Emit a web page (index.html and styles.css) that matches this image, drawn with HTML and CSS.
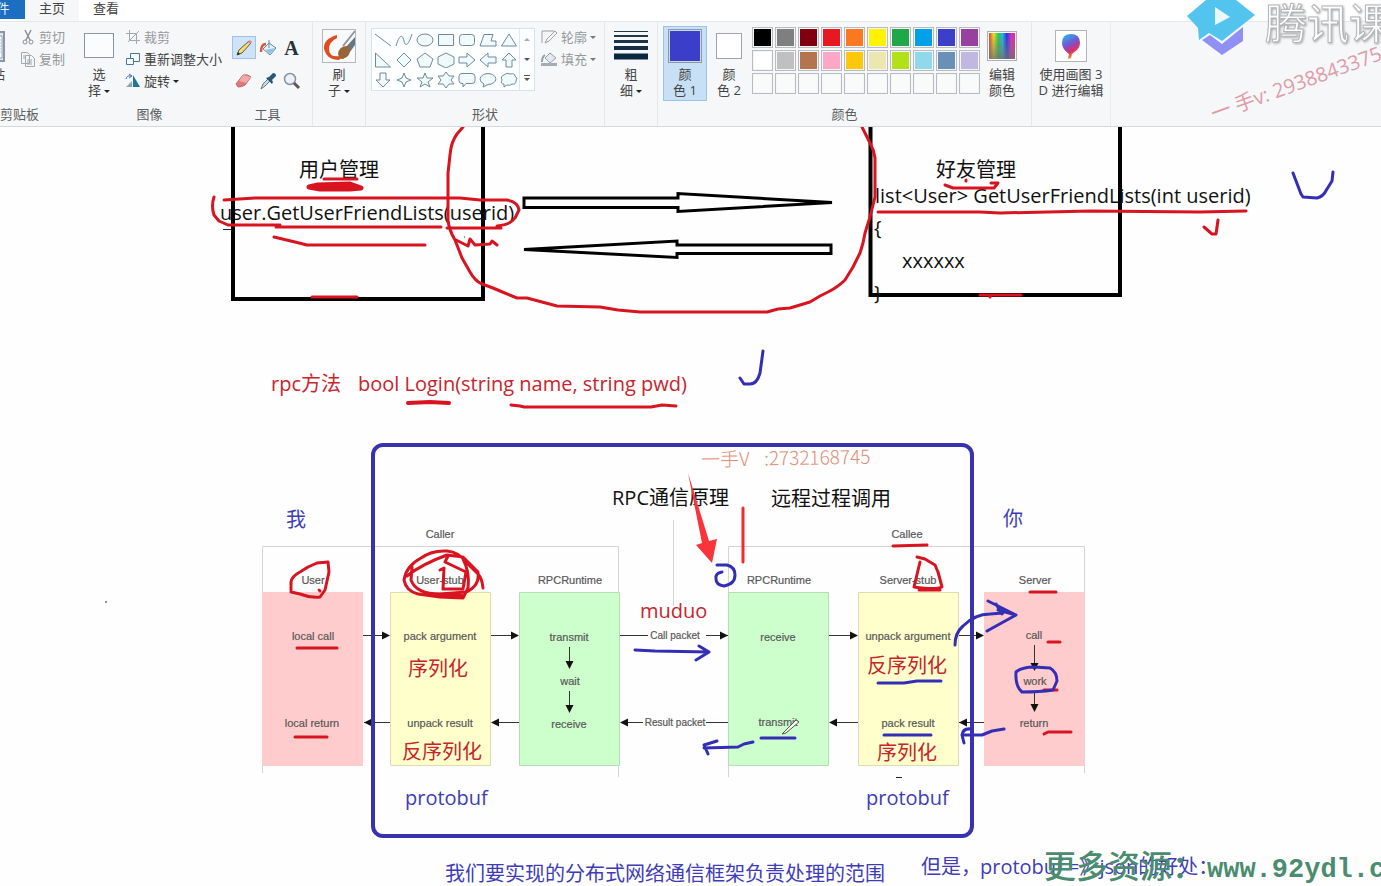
FILE: index.html
```html
<!DOCTYPE html>
<html lang="zh-CN">
<head>
<meta charset="utf-8">
<title>画图</title>
<link rel="stylesheet" href="styles.css">
</head>
<body>
<svg class="defs" aria-hidden="true">
  <defs>
    <linearGradient id="rainbow" x1="0" x2="1" y1="0" y2="0">
      <stop offset="0" stop-color="#e8402a"/><stop offset=".18" stop-color="#f0e020"/><stop offset=".36" stop-color="#28c848"/>
      <stop offset=".52" stop-color="#20b8e8"/><stop offset=".68" stop-color="#2830e0"/><stop offset=".86" stop-color="#d828d8"/><stop offset="1" stop-color="#f02860"/>
    </linearGradient>
    <linearGradient id="fade" x1="0" x2="0" y1="0" y2="1">
      <stop offset="0" stop-color="#808080" stop-opacity="0"/><stop offset="1" stop-color="#707070" stop-opacity=".8"/>
    </linearGradient>
    <linearGradient id="balloon" x1=".2" x2=".6" y1="0" y2="1">
      <stop offset="0" stop-color="#28b8e8"/><stop offset=".4" stop-color="#7058d8"/><stop offset=".7" stop-color="#d83068"/><stop offset="1" stop-color="#f0b020"/>
    </linearGradient>
  </defs>
</svg>

<header class="top">
  <nav class="tabs">
    <button class="tab file">文件</button>
    <button class="tab active">主页</button>
    <button class="tab">查看</button>
  </nav>

  <div class="ribbon">
    <section class="group">
      <div class="tools clip">
        <button class="big paste"><span class="pic"><svg width="26" height="32"><rect x="1" y="2" width="24" height="29" fill="#dce8f4" stroke="#8a94a4" stroke-width="2"/><path d="M10 6h13v22H10z" fill="#fff" stroke="#8aa0b8"/><path d="M12 10h10M12 13h10M12 16h10M12 19h10M12 22h10" stroke="#9cc0e0"/></svg></span>粘贴</button>
        <div class="stack">
          <button class="small dim"><svg width="16" height="16"><path d="M5 1l5 10M11 1L6 11" stroke="#8c9096" stroke-width="1.5" fill="none"/><circle cx="5" cy="13" r="2" fill="none" stroke="#8c9096"/><circle cx="11" cy="13" r="2" fill="none" stroke="#8c9096"/></svg>剪切</button>
          <button class="small dim"><svg width="16" height="16"><path d="M1.500 1.500h6l2 2v9h-8z M5.500 4.500h6l3 3v8h-9z" fill="#f4f6f8" stroke="#a4a8ac"/><path d="M7 9h5M7 11h5M7 13h5M3 5h2M3 7h2" stroke="#a4a8ac"/></svg>复制</button>
        </div>
      </div>
      <h2>剪贴板</h2>
    </section>

    <section class="group">
      <div class="tools image">
        <button class="big select"><span class="pic"><svg width="30" height="26"><rect x=".5" y=".5" width="29" height="24" fill="#fafcfd" stroke="#8a94a0"/></svg></span>选<br>择<i class="caret"></i></button>
        <div class="stack">
          <button class="small dim"><svg width="16" height="16"><path d="M4.500 1v10.500H15M1 4.500h10.500V15M3 13L14 2" fill="none" stroke="#a0a8b0"/></svg>裁剪</button>
          <button class="small"><svg width="16" height="16"><path d="M5.500 2.500h9v8h-9z" fill="#f4f9fd" stroke="#4a7898"/><path d="M1.500 7.500h7v6h-7z" fill="#f4f9fd" stroke="#4a7898"/></svg>重新调整大小</button>
          <button class="small"><svg width="16" height="16"><path d="M8 2v12h7z" fill="#1c7898"/><path d="M7 8v6H1z" fill="#8ca4b4"/><path d="M1 6q1-4 5-3M4 1l3 2-3 2" fill="none" stroke="#3a70b0"/></svg>旋转<i class="caret"></i></button>
        </div>
      </div>
      <h2>图像</h2>
    </section>

    <section class="group">
      <div class="tools palette-tools">
        <button class="tool on" aria-label="铅笔"><svg width="18" height="18"><path d="M2 16l2-5L14 2l2 2L7 14z" fill="#f4dc70" stroke="#5a5a50"/><path d="M2 16l1-3 2 2z" fill="#222"/><path d="M13 3l2 2 2-2-2-2z" fill="#d88898"/></svg></button>
        <button class="tool" aria-label="填充"><svg width="18" height="18"><path d="M4 10l6-6 7 5-6 7z" fill="#e4f2f8" stroke="#6a8aa0"/><path d="M10 9V1" stroke="#6a8aa0"/><path d="M6 11l10-2-5 6z" fill="#8cc4e4"/><path d="M7 5Q2 5 2 13" fill="none" stroke="#e05840" stroke-width="2.500"/></svg></button>
        <button class="tool letter" aria-label="文本">A</button>
        <button class="tool" aria-label="橡皮擦"><svg width="18" height="18"><path d="M1 12L8 3q5-1 8 2l-6 8q-3 2-7 2z" fill="#e07878" stroke="#b86868"/><path d="M8 3l8 2-5 6-7-2z" fill="#f4a8a8"/></svg></button>
        <button class="tool" aria-label="颜色选取器"><svg width="18" height="18"><path d="M2 17l2-5 5-5 2 2-5 5z" fill="#c8e0ee" stroke="#607888"/><path d="M7 6l6 6 1-2-1-2 4-4q0-3-3-3l-4 4z" fill="#28587c"/></svg></button>
        <button class="tool" aria-label="放大镜"><svg width="18" height="18"><circle cx="7" cy="7" r="5.500" fill="#eaf2f8" stroke="#8890a0" stroke-width="1.500"/><path d="M11 11l5 5" stroke="#605850" stroke-width="3"/></svg></button>
      </div>
      <h2>工具</h2>
    </section>

    <section class="group ruled">
      <div class="tools centered">
        <button class="big"><span class="pic"><svg width="34" height="34"><rect x=".5" y=".5" width="33" height="33" fill="#f8f9fa" stroke="#b4b8bc"/><path d="M15 6Q1 10 2 20q3 11 14 11 4-1 3-4Q7 29 7 20q0-7 8-11z" fill="#e04c20"/><path d="M33 8L24 18l4 5 5-7z" fill="#607888"/><path d="M33 2L21 17" stroke="#8c98a0" stroke-width="2"/><path d="M27 17q-10-1-11 8 1 5 5 5 8-3 7-10z" fill="#98643a"/></svg></span>刷<br>子<i class="caret"></i></button>
      </div>
    </section>

    <section class="group ruled">
      <div class="tools shapes">
        <div class="gallery">
          <div class="cells">
            <button aria-label="直线"><svg><path d="M1 2l16 12"/></svg></button>
            <button aria-label="曲线"><svg><path d="M1 14C5 0 8 4 9 9s4 6 8-7"/></svg></button>
            <button aria-label="椭圆"><svg><ellipse cx="9" cy="8" rx="8" ry="6"/></svg></button>
            <button aria-label="矩形"><svg><path d="M1.500 2.500h15v11h-15z"/></svg></button>
            <button aria-label="圆角矩形"><svg><rect x="1.500" y="2.500" width="15" height="11" rx="3"/></svg></button>
            <button aria-label="多边形"><svg><path d="M5 2.500h9L12 9h5v5H1z"/></svg></button>
            <button aria-label="三角形"><svg><path d="M9 2l7.500 12h-15z"/></svg></button>
            <button aria-label="直角三角形"><svg><path d="M1.500 1v14h15z"/></svg></button>
            <button aria-label="菱形"><svg><path d="M9 1l7 7-7 7-7-7z"/></svg></button>
            <button aria-label="五边形"><svg><path d="M9 1l8 6-3 8H4L1 7z"/></svg></button>
            <button aria-label="六边形"><svg><path d="M9 1l8 4v7l-8 4-8-4V5z"/></svg></button>
            <button aria-label="右箭头"><svg><path d="M1 5h8V1l8 7-8 7v-4H1z"/></svg></button>
            <button aria-label="左箭头"><svg><path d="M17 5H9V1L1 8l8 7v-4h8z"/></svg></button>
            <button aria-label="上箭头"><svg><path d="M6 15V8H2l7-7 7 7h-4v7z"/></svg></button>
            <button aria-label="下箭头"><svg><path d="M6 1v7H2l7 7 7-7h-4V1z"/></svg></button>
            <button aria-label="四角星"><svg><path d="M9 1l2 5 5 2-5 2-2 5-2-5-5-2 5-2z"/></svg></button>
            <button aria-label="五角星"><svg><path d="M9 1l2 5h6l-5 4 2 5-5-3-5 3 2-5-5-4h6z"/></svg></button>
            <button aria-label="六角星"><svg><path d="M9 0l3 4h5l-3 4 3 4h-5l-3 4-3-4H1l3-4-3-4h5z"/></svg></button>
            <button aria-label="圆角标注"><svg><path d="M4 1.500h10q3 0 3 3v4q0 3-3 3H8L5 15v-3.500H4q-3 0-3-3v-4q0-3 3-3z"/></svg></button>
            <button aria-label="椭圆标注"><svg><path d="M5 12Q1 10 1 7q1-5 8-5.500 7 .5 8 5.500-1 5-8 5.500L4 15z"/></svg></button>
            <button aria-label="云形标注"><svg><path d="M4 12Q0 12 2 8 0 4 4 3q3-3 6-1 5-1 5 2 3 2 1 5 0 4-4 3-2 2-5 1l-3 2z"/></svg></button>
          </div>
          <div class="scroll"><button aria-label="上一行"><i class="caret up"></i></button><button aria-label="下一行"><i class="caret"></i></button><button aria-label="更多"><i class="caret more"></i></button></div>
        </div>
        <div class="stack">
          <button class="small dim"><svg width="18" height="16"><path d="M14 2H2v12M5 14l2-4 8-8 2 2-8 8z" fill="none" stroke="#9aa0a4"/></svg>轮廓<i class="caret"></i></button>
          <button class="small dim"><svg width="18" height="16"><path d="M5 7l5-5 6 5-6 5z" fill="#e4e8ec" stroke="#98a0a8"/><path d="M5 4Q2 6 2 11" fill="none" stroke="#98a0a8" stroke-width="2"/><path d="M1 12h16v3H1z" fill="#a4acb4"/></svg>填充<i class="caret"></i></button>
        </div>
      </div>
      <h2>形状</h2>
    </section>

    <section class="group ruled">
      <div class="tools centered">
        <button class="big"><span class="pic"><svg width="34" height="32"><path d="M0 1.500h34" stroke="#24384a"/><path d="M0 6h34" stroke="#24384a" stroke-width="2"/><path d="M0 11.500h34" stroke="#1c3448" stroke-width="3"/><path d="M0 18h34" stroke="#142c44" stroke-width="4"/><path d="M0 26.500h34" stroke="#0c2840" stroke-width="6"/></svg></span>粗<br>细<i class="caret"></i></button>
      </div>
    </section>

    <section class="group ruled">
      <div class="tools colors">
        <button class="big chosen"><span class="pic"><svg width="34" height="34"><rect x=".5" y=".5" width="33" height="33" fill="#c8d8ee" stroke="#9098a8"/><rect x="2" y="2" width="30" height="30" fill="#3a3ec8"/></svg></span>颜<br>色 1</button>
        <button class="big second"><span class="pic"><svg width="26" height="26"><rect x=".5" y=".5" width="25" height="25" fill="#fff" stroke="#a0a4a8"/></svg></span>颜<br>色 2</button>
        <div class="swatches">
          <button class="c-black" aria-label="黑色"></button><button class="c-gray" aria-label="灰色"></button><button class="c-maroon" aria-label="深红"></button><button class="c-red" aria-label="红色"></button><button class="c-orange" aria-label="橙色"></button><button class="c-yellow" aria-label="黄色"></button><button class="c-green" aria-label="绿色"></button><button class="c-sky" aria-label="青绿"></button><button class="c-indigo" aria-label="靛蓝"></button><button class="c-purple" aria-label="紫色"></button>
          <button class="c-white" aria-label="白色"></button><button class="c-silver" aria-label="浅灰"></button><button class="c-brown" aria-label="褐色"></button><button class="c-pink" aria-label="玫瑰色"></button><button class="c-gold" aria-label="金色"></button><button class="c-cream" aria-label="浅黄"></button><button class="c-lime" aria-label="酸橙色"></button><button class="c-aqua" aria-label="淡青绿"></button><button class="c-steel" aria-label="蓝灰"></button><button class="c-lilac" aria-label="淡紫"></button>
          <button></button><button></button><button></button><button></button><button></button><button></button><button></button><button></button><button></button><button></button>
        </div>
        <button class="big second"><span class="pic"><svg width="30" height="30"><rect x=".5" y=".5" width="29" height="29" fill="#fff" stroke="#b0b0b4"/><rect x="2" y="2" width="26" height="26" fill="url(#rainbow)"/><rect x="2" y="2" width="26" height="26" fill="url(#fade)"/></svg></span>编辑<br>颜色</button>
      </div>
      <h2>颜色</h2>
    </section>

    <section class="group ruled last">
      <div class="tools centered">
        <button class="big"><span class="pic"><svg width="32" height="32"><rect x=".5" y=".5" width="31" height="31" fill="#fff" stroke="#b4b4b8"/><path d="M16 4q9 0 9 9 0 6-8 11l-1 4-3 1 1-5q-7-5-7-11 0-9 9-9z" fill="url(#balloon)"/></svg></span>使用画图 3<br>D 进行编辑</button>
      </div>
    </section>
  </div>

  <svg class="brand" width="200" height="127" viewBox="1181 0 200 127">
    <path d="M1202 40L1210 35 1222 44 1243 27V41L1222 55z" fill="#9090f4"/>
    <path d="M1187 16L1206 0H1236L1255 15 1222 41 1209 33 1199 40 1198 28z" fill="#52c4ee"/>
    <path d="M1215 7v18l15-8z" fill="#e8f8fe"/>
    <text class="brand-name" x="1265" y="39">腾讯课堂</text>
    <g transform="translate(1214 121) rotate(-20)" class="seller"><text x="0" y="0">一 手v: 2938843375</text></g>
  </svg>
</header>

<main>
<svg class="canvas" viewBox="0 127 1381 759">
  <g class="frame">
    <path d="M233 127V299H483V127M870.500 127V295H1120V127"/>
    <path d="M524 198H678V193.500L832 202.500 678 211.500V207.500H524zM831 245H677V241L524 249.500 677 257.500V253.500H831z" stroke-width="3"/>
  </g>
  <g class="note black">
    <text x="299" y="177">用户管理</text><text x="220" y="220">user.GetUserFriendLists(userid)</text>
    <text x="936" y="177">好友管理</text><text x="875" y="203">list&lt;User&gt; GetUserFriendLists(int userid)</text>
    <text x="874" y="235">{</text><text x="902" y="268">xxxxxx</text><text x="874" y="300">}</text>
    <text x="612" y="505">RPC通信原理</text><text x="771" y="506">远程过程调用</text>
  </g>
  <g class="note red"><text x="271" y="391">rpc方法</text><text x="358" y="391">bool Login(string name, string pwd)</text></g>

  <g class="lanes">
    <path d="M262.500 773V546.500H618.500V777M728.500 777V546.500H1084.500V773M673.500 520V606" fill="none" stroke="#d4d4d4"/>
    <path class="pink" d="M262 592h101v174h-101zM984 592h101v174h-101z"/>
    <path class="cream" d="M390.500 592.500h100v173h-100zM858.500 592.500h100v173h-100z"/>
    <path class="mint" d="M519.500 592.500h100v173h-100zM728.500 592.500h100v173h-100z"/>
  </g>
  <g class="flow">
    <path d="M363 635.500H389M491 635.500H518M829 635.500H857M959 635.500H983M984 722.500H959M858 722.500H830M519 722.500H492M390 722.500H364M569.500 647V668M569.500 691V712M1034.500 645V670M1034.500 691V711M706 635.500H728M643 722.500H621M620 635.500H648M706 722.500H728"/>
    <path class="heads" d="M390 635.500l-8-4v8zM519 635.500l-8-4v8zM728 635.500l-8-4v8zM858 635.500l-8-4v8zM984 635.500l-8-4v8zM364 722.500l8-4v8zM491 722.500l8-4v8zM620 722.500l8-4v8zM829 722.500l8-4v8zM959 722.500l8-4v8zM569.500 669l-4-8h8zM569.500 713l-4-8h8zM1034.500 671l-4-8h8zM1034.500 712l-4-8h8z"/>
  </g>
  <g class="label">
    <text x="440" y="538">Caller</text><text x="907" y="538">Callee</text>
    <text x="313" y="584">User</text><text x="440" y="584">User-stub</text><text x="570" y="584">RPCRuntime</text>
    <text x="779" y="584">RPCRuntime</text><text x="908" y="584">Server-stub</text><text x="1035" y="584">Server</text>
    <text x="313" y="640">local call</text><text x="440" y="640">pack argument</text><text x="569" y="641">transmit</text>
    <text x="778" y="641">receive</text><text x="908" y="640">unpack argument</text><text x="1034" y="639">call</text>
    <text x="570" y="685">wait</text><text x="1035" y="685">work</text>
    <text x="312" y="727">local return</text><text x="440" y="727">unpack result</text><text x="569" y="728">receive</text>
    <text x="778" y="726">transmit</text><text x="908" y="727">pack result</text><text x="1034" y="727">return</text>
    <text class="tiny" x="675" y="639">Call packet</text><text class="tiny" x="675" y="726">Result packet</text>
  </g>
  <g class="note red">
    <text x="408" y="676">序列化</text><text x="402" y="759">反序列化</text><text x="640" y="618">muduo</text>
    <text x="867" y="673">反序列化</text><text x="877" y="760">序列化</text>
  </g>
  <rect class="scope" x="373" y="445" width="599" height="391" rx="10"/>
  <g class="note blue">
    <text x="286" y="527">我</text><text x="1003" y="526">你</text>
    <text x="405" y="805">protobuf</text><text x="866" y="805">protobuf</text>
    <text x="445" y="881">我们要实现的分布式网络通信框架负责处理的范围</text>
    <text x="921" y="874">但是，</text><text x="980" y="874">protobuf =》json的好处：</text>
  </g>

  <g class="pen red-pen">
    <path d="M463 127L457 134Q451 142 450 155L448 173V220Q449 230 455 240L462 258 470 272Q475 281 482 284L493 288 500 291 517 298H527L542 302 557 306 600 307 618 310 640 312H767L778 309 790 308 810 302 820 296 828 292Q838 287 845 280L853 267 860 253 863 243 865 233 870 217 875 197V158Q874 150 870 143L862 127"/>
    <path d="M214 197Q211 206 214 215L219 221 228 225H280M224 200L255 198H460L480 200H507Q518 202 519 210L515 218Q510 225 497 226M447 228H501M276 227H441"/>
    <path d="M324 179H357"/><path d="M309 187L318 185 350 184 361 188 350 189H320z" stroke-width="5"/>
    <path d="M274 237L295 242 307 245H425M456 240L468 246 470 239 475 245 490 244 492 241 497 245M312 297H357"/>
    <path d="M945 185L953 188H994L998 183H991M966 180v1"/><path d="M878 212H980L1000 213 1090 211 1200 212 1246 211M1204 227L1212 234H1216L1218 220M980 295H1021M990 296v1"/>
    <path d="M408 403L430 402 449 403" stroke-width="4"/><path d="M511 405L520 406 524 407H651L662 405 676 406"/>
    <path d="M317 563L328 562 329 572 325 590 320 597Q310 598 300 594L291 592V582Q292 576 300 572L308 567 317 563M319 590l1 1M297 648H337M295 737H327"/>
    <path d="M483 588Q482 578 478 574L467 563Q459 552 447 551 432 550 421 558 406 566 404 580 406 591 418 594L440 597 463 598 468 588Q470 572 463 559M407 576Q422 564 447 555L463 557 478 572Q480 586 466 592L440 594Q416 594 411 580L412 567M443 589L444 568 440 570M443 589H463L466 572 445 562 448 556"/>
    <path d="M441 596H462" stroke-width="4"/>
    <path d="M893 546L927 545M917 557L925 559 935 565 938 572 942 587Q936 590 914 587L920 562M919 590H940"/>
    <path d="M1030 592H1056M1048 642H1060M1044 690H1057M1044 734L1048 732H1071"/>
    <path d="M743 508V562" stroke="#f02a30"/>
  </g>
  <path d="M688 473L709 541 717 539 712 563 696 545 702 543z" fill="#f9343a"/>
  <g class="pen blue-pen">
    <path d="M1293 173L1301 194 1303 197 1317 198Q1323 197 1327 189L1332 181 1333 172M763 351L760 373Q757 384 750 384H744L740 378"/>
    <path d="M717 565H727Q735 567 735 575 735 584 724 586 716 585 716 579 715 573 722 572"/>
    <path d="M635 650L655 651 709 652M699 646L709 652 696 660M753 742L744 744 738 747 704 748M717 741L704 745 708 754M761 738H795"/>
    <path d="M878 683L904 683 917 681 941 681M884 735H931M955 645Q955 633 963 626 975 614 990 614L1003 613M988 601L1016 615 987 631M996 604L1002 614M1016 615L998 610"/>
    <path d="M1016 672Q1022 667 1034 667L1050 668Q1057 672 1057 681L1053 690Q1040 692 1022 692 1015 686 1016 672zM1004 729L992 731 982 735 963 735M971 729Q963 728 962 735L964 743"/>
  </g>
  <path d="M782 734L796 720 799 722 786 733z" fill="#f4fff4" stroke="#555"/>
  <path d="M896 777.500H902M223 229.500H231M464 237h1M105 602h2" stroke="#222"/>
  <g class="stamp" transform="rotate(-1 790 457)"><text x="701" y="465">一手V</text><text x="764" y="465">:2732168745</text></g>
  <text class="site" x="1044" y="878">更多资源：</text><text class="site latin" x="1207" y="877">www.92ydl.com</text>
</svg>
</main>
</body>
</html>
```
FILE: styles.css
```css
* { box-sizing: border-box; }
body {
  margin: 0;
  overflow: hidden;
  background: #fefefe;
  color: #444;
  font: 13px/16px "Open Sans", "Noto Sans CJK SC", sans-serif;
}
button {
  margin: 0;
  padding: 0;
  border: 0;
  background: none;
  color: inherit;
  font: inherit;
}
.defs { position: absolute; width: 0; height: 0; }

.top { position: relative; overflow: hidden; }
.tabs { display: flex; height: 21px; margin-left: -32px; background: #fff; }
.tab { width: 54px; padding-bottom: 5px; }
.tab.file { width: 57px; background: #1b6ec2; color: #e8f2fc; height: 19px; padding-bottom: 3px; }
.tab.active { background: #f5f7f8; }

.ribbon {
  display: grid;
  grid-template-columns: 113px 147px 89px 53px 239px 53px 374px 80px;
  height: 106px;
  margin-left: -37px;
  border-top: 1px solid #e6e9eb;
  border-bottom: 1px solid #d6d9db;
  background: #f5f7f8;
}
.group { display: flex; flex-direction: column; justify-content: space-between; padding: 4px 0; }
.group.ruled { border-left: 1px solid #e4e8ea; }
.group.last { border-right: 1px solid #eaedef; }
.group h2 { margin: 0; font-size: 13px; font-weight: 400; line-height: 16px; text-align: center; color: #5c5f62; }

.tools { display: flex; align-items: flex-start; }
.clip { gap: 8px; padding-left: 9px; }
.image { gap: 10px; padding-left: 7px; }
.centered { justify-content: center; }
.shapes { gap: 5px; padding: 2px 0 0 5px; }
.shapes .stack { margin-top: -2px; }
.colors { gap: 3px; padding-left: 5px; }

.big { flex: none; width: 44px; padding: 2px 0; border: 1px solid transparent; line-height: 16px; text-align: center; white-space: nowrap; }
.big.paste { width: 40px; }
.big.select { width: 32px; }
.big.second { width: 38px; }
.last .big { width: 72px; }
.big.chosen { border-color: #98c4e8; background: #c8e0f6; }
.pic { display: flex; align-items: center; justify-content: center; height: 34px; margin-bottom: 3px; }

.stack { display: flex; flex-direction: column; align-items: flex-start; }
.small { display: flex; align-items: center; gap: 3px; height: 22px; white-space: nowrap; }
.dim { color: #96999c; }

.caret { display: inline-block; margin-left: 3px; vertical-align: middle; border: 3px solid transparent; border-top-color: #222; border-bottom: 0; }
.small .caret { margin-left: 0; }
.dim .caret { border-top-color: #777; }
.scroll .caret { margin: 0; border-top-color: #555; }
.scroll .caret.up { border-top: 0; border-bottom: 3px solid #aaa; }
.caret.more { position: relative; }
.caret.more::before { content: ""; position: absolute; left: -3px; top: -6px; width: 6px; height: 1px; background: #555; }

.palette-tools { display: grid; grid-template-columns: repeat(3, 24px); gap: 10px 0; justify-content: center; padding-top: 10px; }
.tool { display: flex; align-items: center; justify-content: center; height: 23px; border: 1px solid transparent; }
.tool.on { border-color: #9cc4e8; background: #cfe2f6; }
.letter { font: 700 20px/20px "Liberation Serif", serif; color: #26323c; }

.gallery { display: flex; border: 1px solid #d4e4ec; background: #fcfeff; }
.cells { display: grid; grid-template-columns: repeat(7, 21px); grid-auto-rows: 20px; padding-top: 1px; }
.cells button { display: flex; align-items: center; justify-content: center; }
.cells svg { width: 18px; height: 16px; fill: #f0fafc; stroke: #71899a; stroke-width: 1; }
.scroll { display: grid; width: 15px; border-left: 1px solid #dce8ee; }
.scroll button { display: flex; align-items: center; justify-content: center; }

.swatches { display: grid; grid-template-columns: repeat(10, 21px); grid-auto-rows: 21px; gap: 2px; padding: 1px 0 0 1px; }
.swatches button { border: 1px solid #b8bcc0; background: #f9fafa; box-shadow: inset 0 0 0 1px #f4f6f8; }
.swatches .c-black { background: #000; }
.swatches .c-gray { background: #7f7f7f; }
.swatches .c-maroon { background: #800010; }
.swatches .c-red { background: #e81820; }
.swatches .c-orange { background: #fb7820; }
.swatches .c-yellow { background: #fff200; }
.swatches .c-green { background: #20a848; }
.swatches .c-sky { background: #00a0e6; }
.swatches .c-indigo { background: #3c40c8; }
.swatches .c-purple { background: #9840a0; }
.swatches .c-white { background: #fff; }
.swatches .c-silver { background: #c0c0c0; }
.swatches .c-brown { background: #b47450; }
.swatches .c-pink { background: #fca8c4; }
.swatches .c-gold { background: #fcc80c; }
.swatches .c-cream { background: #ece6b0; }
.swatches .c-lime { background: #b4e018; }
.swatches .c-aqua { background: #90d8ea; }
.swatches .c-steel { background: #6a90b8; }
.swatches .c-lilac { background: #c0b8e0; }

.brand { position: absolute; top: 0; right: 0; pointer-events: none; }
.brand-name { font: 42px "Noto Sans CJK SC", sans-serif; fill: #fff; stroke: #b4b7ba; stroke-width: 1; filter: drop-shadow(1px 1px 1px #aaa); }
.seller { font: 20px "Open Sans", "Noto Sans CJK SC", sans-serif; fill: #e09ca8; }

.canvas { display: block; width: 100%; height: auto; }
.frame path { fill: none; stroke: #000; stroke-width: 4; }
.frame path + path { stroke-width: 3; }
.note { font: 20px "Open Sans", "Noto Sans CJK SC", sans-serif; }
.black { fill: #111; }
.red { fill: #c8242c; }
.blue { fill: #403cb8; }
.pink { fill: #fecccc; }
.cream { fill: #ffffcc; stroke: #dcdcb4; }
.mint { fill: #ccffcc; stroke: #b8dcb8; }
.flow path { fill: none; stroke: #333; }
.flow .heads { fill: #111; stroke: none; }
.label { font: 11px "Liberation Sans", Arial, sans-serif; fill: #585858; stroke: #585858; stroke-width: .2; text-anchor: middle; }
.label .tiny { font-size: 10px; }
.scope { fill: none; stroke: #3832b0; stroke-width: 4; }
.pen { fill: none; stroke-width: 3; stroke-linecap: round; stroke-linejoin: round; }
.red-pen { stroke: #d81420; }
.blue-pen { stroke: #342eb4; }
.stamp { font: 300 19px "Noto Sans CJK SC", sans-serif; fill: #e08c74; }
.site { font: 500 32px "Noto Sans CJK SC", sans-serif; fill: #4a8c70; }
.site.latin { font: 700 27px "Liberation Mono", monospace; }
```
